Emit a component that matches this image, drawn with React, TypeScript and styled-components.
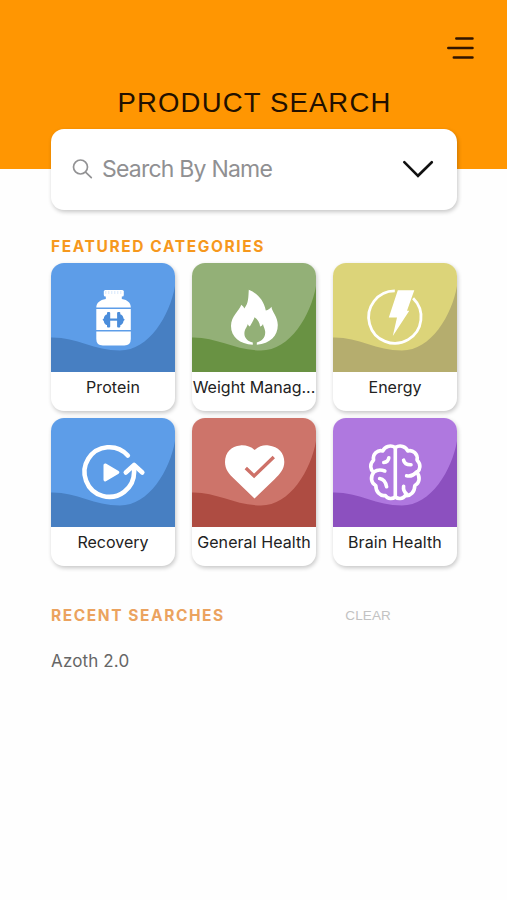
import React from "react";
import styled, { createGlobalStyle } from "styled-components";

const GlobalStyle = createGlobalStyle`
  * { box-sizing: border-box; }
  body { margin: 0; background: #fefefe; font-family: Inter, "Liberation Sans", sans-serif; }
`;

const Screen = styled.main`
  width: 507px;
  height: 900px;
  overflow: hidden;
  background: #fefefe;
`;

const Header = styled.header`
  height: 169px;
  padding-top: 36px;
  background: #ff9602;
  display: flex;
  flex-direction: column;
`;

const MenuButton = styled.button`
  align-self: flex-end;
  width: 28px;
  height: 24px;
  margin-right: 32px;
  padding: 0;
  border: 0;
  background: none;
  svg { display: block; }
`;

const Title = styled.h1`
  margin: 27px 0 0;
  padding-left: 2px;
  text-align: center;
  font: 400 27.5px/32px "Liberation Sans", sans-serif;
  letter-spacing: 1.15px;
  color: #221000;
`;

const Content = styled.div`
  margin: -40px 50px 0 51px;
`;

const SearchBox = styled.div`
  height: 81px;
  padding: 0 23px 2px 21px;
  display: flex;
  align-items: center;
  border-radius: 13px;
  background: #fff;
  box-shadow: 1px 2px 4px rgba(0, 0, 0, 0.22);
`;

const Placeholder = styled.span`
  flex: 1;
  margin-left: 9px;
  font-size: 23px;
  line-height: 30px;
  letter-spacing: -0.78px;
  color: #909092;
`;

const SectionTitle = styled.h2<{ $muted?: boolean }>`
  margin: 0;
  font-size: 15.5px;
  line-height: 20px;
  font-weight: 700;
  letter-spacing: ${(p) => (p.$muted ? "1.57px" : "1.61px")};
  color: ${(p) => (p.$muted ? "#eba35f" : "#f6981d")};
`;

const Featured = styled.section`
  margin-top: 27px;
`;

const Grid = styled.div`
  margin-top: 6px;
  display: grid;
  grid-template-columns: repeat(3, 124px);
  justify-content: space-between;
  row-gap: 7px;
`;

const Card = styled.article`
  height: 148px;
  border-radius: 13px;
  background: #fff;
  overflow: hidden;
  box-shadow: 1px 2px 4px rgba(0, 0, 0, 0.22);
`;

const Art = styled.svg`
  display: block;
  width: 124px;
  height: 109px;
`;

const Label = styled.div<{ $spacing: number }>`
  margin-top: 5px;
  text-align: center;
  white-space: nowrap;
  font-size: 16px;
  line-height: 20px;
  letter-spacing: ${(p) => p.$spacing}px;
  color: #222;
`;

const RecentHeader = styled.div`
  margin-top: 40px;
  display: flex;
  align-items: center;
  justify-content: space-between;
  padding-right: 66px;
`;

const ClearButton = styled.button`
  padding: 0;
  border: 0;
  background: none;
  font: 400 13.5px/18px "Liberation Sans", sans-serif;
  letter-spacing: 0.15px;
  color: #c2c2c2;
`;

const RecentItem = styled.div`
  margin-top: 24px;
  font-size: 17px;
  line-height: 22px;
  letter-spacing: 0.15px;
  color: #666;
`;

const Bottle = () => (
  <g fill="#fff">
    <rect x="52" y="27" width="20" height="6.5" rx="1.5" />
    <path d="M54 33H70V36C76 37 79 40 79 44.5H44.5C44.5 40 48 37 54 36Z" />
    <path d="M44.5 46H79V67H44.5Z" />
    <path d="M44.5 68.5H79V76Q79 82.5 72.5 82.5H51Q44.5 82.5 44.5 76Z" />
    <path d="M54 28v3M57 28v3M60 28v3M63 28v3M66 28v3M69 28v3" stroke="#b8d5f6" strokeWidth=".6" />
    <g fill="#4b8ddb">
      <rect x="57" y="55.5" width="10" height="2.2" />
      <rect x="55.2" y="49" width="3.2" height="15.5" rx="1" />
      <rect x="65.3" y="49" width="3.2" height="15.5" rx="1" />
      <path d="M55.5 51.2v11Q52.3 61.5 52 58L50.7 56.7l1.3-1.3Q52.3 52 55.5 51.2ZM68.2 51.2v11Q71.4 61.5 71.7 58L73 56.7l-1.3-1.3Q71.4 52 68.2 51.2Z" />
    </g>
  </g>
);

const Flame = () => (
  <path
    fill="#fff"
    d="M56 26.8C64 30 71 37 73 47.5C75.5 47 77.5 45.5 78.7 43.8C79 49 85 53.5 85 62C85 73 77.5 80.5 64 81.7V79.5C70 78 73 73.5 72.3 68C71.8 65 70.5 63.5 70.2 61C69.5 62.5 68.5 63.3 67.3 63.6C67 59.5 64.8 56.5 61.8 54.3C60.5 58 58.8 60.5 57 63.5C56 63 55.3 62 55 61C54.5 64 51.6 66 51.6 70.5C51.6 75 55 78.5 60 79.5V81.7C47 81 38.2 74 38.2 63C38.2 53 46.5 48 48.5 41.8C50 43 51 44 51.5 45.5C56 40 55.5 33.5 56 26.8Z"
  />
);

const Bolt = () => (
  <g>
    <path d="M61 27.9A26.2 26.2 0 1 0 79.3 35.3" fill="none" stroke="#fff" strokeWidth="2.8" />
    <path d="M64 27.3H80.5L73.2 47.8H75.5L59 73L63.2 54.5H55Z" fill="#fff" />
  </g>
);

const Replay = () => (
  <g fill="none" stroke="#fff" strokeWidth="4.6" strokeLinecap="round" strokeLinejoin="round">
    <path d="M76 37.5A24.8 24.8 0 1 0 82.3 54V48" />
    <path d="M74 54.5L82.3 47L90.5 54.5" />
    <path d="M53.3 47L66 54.3L53.3 61.8Z" fill="#fff" strokeWidth="3.2" />
  </g>
);

const Heart = () => (
  <g>
    <path d="M61.8 32C67 27.5 71 27 76 27.5C85.5 28.5 91.5 35 91.5 44C91.5 51 87 56 82 61L61.7 80.5L41.5 61C36 56 32.2 51 32.2 44C32.2 34.5 38.5 28 47.5 27.4C53 27 58 28.5 61.8 32Z" fill="#fff" />
    <path d="M53 50L61.3 58L81 39" fill="none" stroke="#ce7168" strokeWidth="3.4" />
  </g>
);

const Brain = () => (
  <g fill="none" stroke="#fff" strokeWidth="3.6" strokeLinecap="round" strokeLinejoin="round">
    <path d="M61.5 29.8V79" />
    <path d="M61.5 29.5C56.5 26.5 51 28.5 49 33C44 31.5 38.5 36 39.8 42C35.5 46.5 36.5 51.5 39.8 54.5C36.5 59 37 65 42 67.5C42 74 46.5 78.5 51.5 77.5C54 81.5 59 81 61.5 79" />
    <path d="M61.5 29.5C66.5 26.5 72 28.5 74 33C79 31.5 84.5 36 83.2 42C87.5 46.5 86.5 51.5 83.2 54.5C86.5 59 86 65 81 67.5C81 74 76.5 78.5 71.5 77.5C69 81.5 64 81 61.5 79" />
    <path d="M50 44.5Q54.5 44 55 39.8M40 54Q45 50.5 51 53M45.8 60.5Q51.5 61.5 52.8 68.8M69.8 42.2Q71 47 77.2 46.8M72.8 57.8Q78.5 59 82.8 54M69.8 68.3Q69 73 73.2 76.5" />
  </g>
);

type Category = {
  name: string;
  base: string;
  wave: string;
  spacing: number;
  Icon: React.FC;
};

const categories: Category[] = [
  { name: "Protein", base: "#5d9de8", wave: "#477fc2", spacing: 0.1, Icon: Bottle },
  { name: "Weight Manag...", base: "#93b077", wave: "#699243", spacing: 0, Icon: Flame },
  { name: "Energy", base: "#dcd479", wave: "#b5ad6e", spacing: 0, Icon: Bolt },
  { name: "Recovery", base: "#5d9de8", wave: "#477fc2", spacing: 0, Icon: Replay },
  { name: "General Health", base: "#cd746a", wave: "#ae4c42", spacing: 0.07, Icon: Heart },
  { name: "Brain Health", base: "#af78df", wave: "#8c50bf", spacing: 0.12, Icon: Brain },
];

const CategoryCard = ({ name, base, wave, spacing, Icon }: Category) => (
  <Card>
    <Art viewBox="0 0 124 109">
      <rect width="124" height="109" fill={base} />
      <path d="M0 74.5C25 74 43 87.5 69 87.5C98 87.5 119 52 124 23V109H0Z" fill={wave} />
      <g transform="translate(0.8 0)">
        <Icon />
      </g>
    </Art>
    <Label $spacing={spacing}>{name}</Label>
  </Card>
);

export default function App() {
  return (
    <>
      <GlobalStyle />
      <Screen>
        <Header>
          <MenuButton aria-label="Menu">
            <svg width="28" height="24" fill="none" stroke="#301500" strokeWidth="2.5" strokeLinecap="round">
              <path d="M9.3 2.5H25.5M1.3 12H25.5M6.8 21.4H25.5" />
            </svg>
          </MenuButton>
          <Title>PRODUCT SEARCH</Title>
        </Header>
        <Content>
          <SearchBox>
            <svg width="21" height="22" fill="none" stroke="#929294" strokeWidth="1.7" strokeLinecap="round">
              <circle cx="8.5" cy="9" r="7" />
              <path d="M13.8 14.3L19.3 19.7" />
            </svg>
            <Placeholder>Search By Name</Placeholder>
            <svg width="32" height="20" fill="none" stroke="#111" strokeWidth="2.6" strokeLinecap="round" strokeLinejoin="miter">
              <path d="M2.3 3.2L16 16.8L29.8 3.2" />
            </svg>
          </SearchBox>
          <Featured>
            <SectionTitle>FEATURED CATEGORIES</SectionTitle>
            <Grid>
              {categories.map((c) => (
                <CategoryCard key={c.name} {...c} />
              ))}
            </Grid>
          </Featured>
          <section>
            <RecentHeader>
              <SectionTitle $muted>RECENT SEARCHES</SectionTitle>
              <ClearButton>CLEAR</ClearButton>
            </RecentHeader>
            <RecentItem>Azoth 2.0</RecentItem>
          </section>
        </Content>
      </Screen>
    </>
  );
}
